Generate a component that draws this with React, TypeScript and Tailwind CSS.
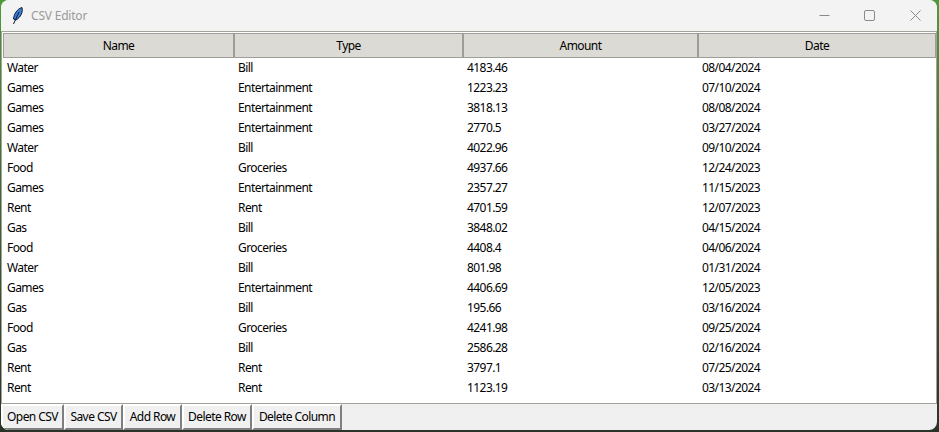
const rows = [
  ["Water", "Bill", "4183.46", "08/04/2024"],
  ["Games", "Entertainment", "1223.23", "07/10/2024"],
  ["Games", "Entertainment", "3818.13", "08/08/2024"],
  ["Games", "Entertainment", "2770.5", "03/27/2024"],
  ["Water", "Bill", "4022.96", "09/10/2024"],
  ["Food", "Groceries", "4937.66", "12/24/2023"],
  ["Games", "Entertainment", "2357.27", "11/15/2023"],
  ["Rent", "Rent", "4701.59", "12/07/2023"],
  ["Gas", "Bill", "3848.02", "04/15/2024"],
  ["Food", "Groceries", "4408.4", "04/06/2024"],
  ["Water", "Bill", "801.98", "01/31/2024"],
  ["Games", "Entertainment", "4406.69", "12/05/2023"],
  ["Gas", "Bill", "195.66", "03/16/2024"],
  ["Food", "Groceries", "4241.98", "09/25/2024"],
  ["Gas", "Bill", "2586.28", "02/16/2024"],
  ["Rent", "Rent", "3797.1", "07/25/2024"],
  ["Rent", "Rent", "1123.19", "03/13/2024"],
];
const heads = ["Name", "Type", "Amount", "Date"];
const btns: [string, string][] = [
  ["Open CSV", "w-[63px]"],
  ["Save CSV", "w-[59px]"],
  ["Add Row", "w-[59px]"],
  ["Delete Row", "w-[70px]"],
  ["Delete Column", "w-[90px]"],
];

export default function App() {
  return (
    <div className="w-[939px] h-[432px] overflow-hidden bg-gradient-to-b from-[#4f9a3a] to-[#2a3328] pl-[1px]">
      <div className="w-[936px] h-[430px] flex flex-col overflow-hidden rounded-[8px] bg-[#f0f0f0] text-[12px] tracking-[-0.57px] text-[#000000] font-['Noto_Sans',sans-serif]">
        <div className="h-[31px] shrink-0 flex items-center bg-[#f3f3f3]">
          <svg width="12" height="20" viewBox="0 0 12 20" className="ml-[11px] mr-[7px]">
            <path d="M1.5 13 C2 8 5 3 10 1.5 C11 6 9 11 4 14 Z" fill="#3f7fd6" stroke="#0b1a33" strokeWidth="1" />
            <path d="M1.5 18 L7 6" stroke="#0b1a33" strokeWidth="1" />
          </svg>
          <span className="text-[#9a9a9a] tracking-[-0.2px]">CSV Editor</span>
          <div className="ml-auto flex items-center pr-[16px]">
            <svg width="11" height="11" viewBox="0 0 11 11" className="mr-[34px]"><path d="M0.5 5.5H10.5" stroke="#8a8a8a" /></svg>
            <svg width="11" height="11" viewBox="0 0 11 11" className="mr-[35px]"><rect x="0.5" y="0.5" width="10" height="10" rx="1.5" fill="none" stroke="#8a8a8a" /></svg>
            <svg width="11" height="11" viewBox="0 0 11 11"><path d="M0.5 0.5L10.5 10.5M10.5 0.5L0.5 10.5" stroke="#8a8a8a" /></svg>
          </div>
        </div>
        <div className="flex-1 min-h-0 border border-[#a5a29c] bg-white pl-[1px] pt-[1px]">
          <div className="grid grid-cols-[231px_229px_235px_238px] h-[25px]">
            {heads.map((h) => (
              <div key={h} className="flex items-center justify-center bg-[#dcdad5] border border-[#9f9d98]">{h}</div>
            ))}
          </div>
          {rows.map((r, i) => (
            <div key={i} className="grid grid-cols-[231px_229px_235px_238px] h-[20px] items-center">
              {r.map((c, j) => (
                <div key={j} className="pl-[4px] whitespace-nowrap">{c}</div>
              ))}
            </div>
          ))}
        </div>
        <div className="h-[26px] shrink-0 flex">
          {btns.map(([b, w]) => (
            <div key={b} className={`${w} flex items-center justify-center border-2 border-solid border-t-white border-l-white border-r-[#7f7f7f] border-b-[#7f7f7f] bg-[#f0f0f0]`}>{b}</div>
          ))}
        </div>
      </div>
    </div>
  );
}
